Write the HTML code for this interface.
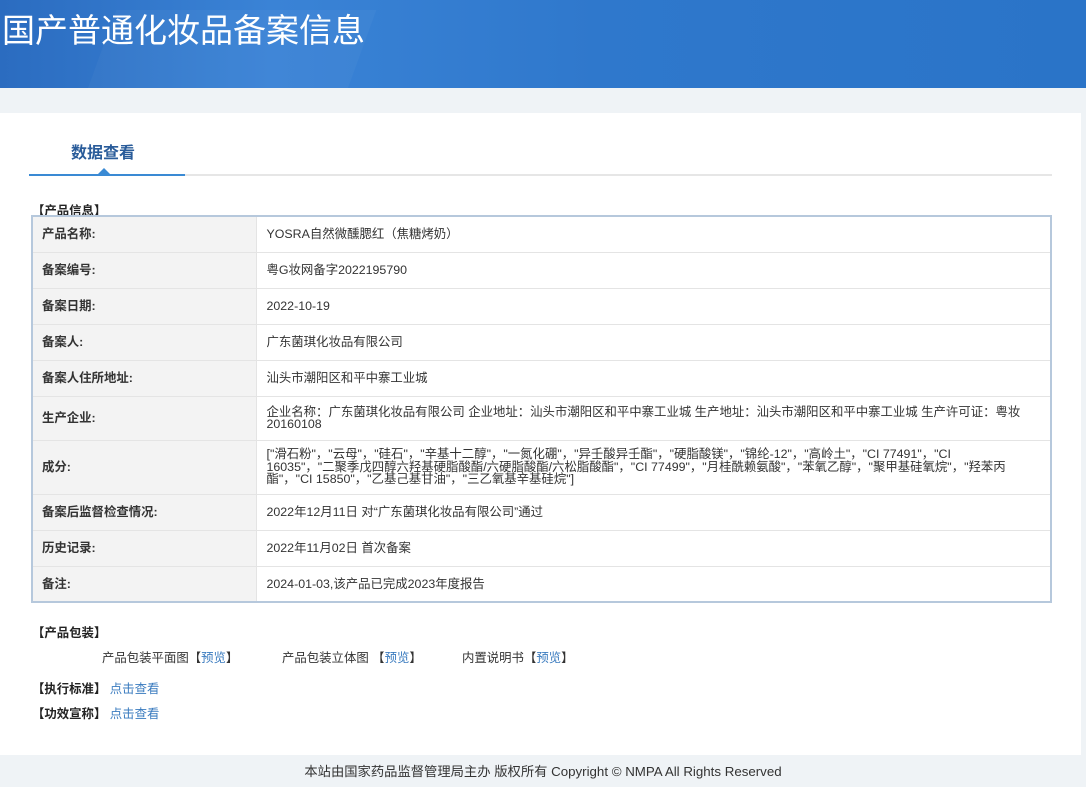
<!DOCTYPE html>
<html><head><meta charset="utf-8"><style>
*{margin:0;padding:0;box-sizing:border-box}
body{width:1086px;height:787px;overflow:hidden;background:#eff3f6;font-family:"Liberation Sans","Noto Sans CJK SC",sans-serif;font-size:12.4px;color:#333;position:relative}
.hd{position:absolute;left:0;top:0;width:1086px;height:88px;background:linear-gradient(90deg,#2b6cc0 0%,#3a83d6 25%,#2f78cc 55%,#2a74c8 100%);overflow:hidden}
.hd:before{content:"";position:absolute;left:100px;top:10px;width:260px;height:90px;background:rgba(255,255,255,.03);transform:skewX(-20deg)}
.hd h1{position:absolute;left:2px;top:4px;font-size:33px;font-weight:normal;color:#fff;letter-spacing:0}
.panel{position:absolute;left:0;top:113px;width:1081px;height:642px;background:#fff}
.tab{position:absolute;left:71px;top:139px;font-size:16px;font-weight:bold;color:#2a5c9a}
.line{position:absolute;left:29px;top:174px;width:1023px;height:2px;background:#e6e6e6}
.line b{position:absolute;left:0;top:0;width:156px;height:2px;background:#3a8ad4}
.tri{position:absolute;left:98px;top:168px;width:0;height:0;border-left:6px solid transparent;border-right:6px solid transparent;border-bottom:6px solid #3a8ad4}
.sec{position:absolute;font-weight:bold;color:#222;font-size:12.4px}
table{position:absolute;left:31px;top:215px;width:1021px;border-collapse:collapse;border:2px solid #b6c8dc}
td{border:1px solid #e4e4e4;padding:0 10px;vertical-align:middle;line-height:12.5px}
td.l{width:224px;background:#f3f3f3;font-weight:bold;color:#333;padding-left:9px}
td.v{color:#333}
a{color:#3a7bbf;text-decoration:none}
.ft{position:absolute;left:0;top:761px;width:1086px;text-align:center;font-size:13.3px;color:#333}
</style></head><body>
<div class="hd"><h1>国产普通化妆品备案信息</h1></div>
<div class="panel"></div>
<div class="tab">数据查看</div>
<div class="line"><b></b></div>
<div class="tri"></div>
<div class="sec" style="left:32px;top:201px">【产品信息】</div>
<table>
<tr style="height:36px"><td class="l">产品名称:</td><td class="v">YOSRA自然微醺腮红（焦糖烤奶）</td></tr>
<tr style="height:36px"><td class="l">备案编号:</td><td class="v">粤G妆网备字2022195790</td></tr>
<tr style="height:36px"><td class="l">备案日期:</td><td class="v">2022-10-19</td></tr>
<tr style="height:36px"><td class="l">备案人:</td><td class="v">广东菌琪化妆品有限公司</td></tr>
<tr style="height:36px"><td class="l">备案人住所地址:</td><td class="v">汕头市潮阳区和平中寨工业城</td></tr>
<tr style="height:44px"><td class="l">生产企业:</td><td class="v">企业名称：广东菌琪化妆品有限公司 企业地址：汕头市潮阳区和平中寨工业城 生产地址：汕头市潮阳区和平中寨工业城 生产许可证：粤妆<br>20160108</td></tr>
<tr style="height:54px"><td class="l">成分:</td><td class="v">["滑石粉"，"云母"，"硅石"，"辛基十二醇"，"一氮化硼"，"异壬酸异壬酯"，"硬脂酸镁"，"锦纶-12"，"高岭土"，"CI 77491"，"CI<br>16035"，"二聚季戊四醇六羟基硬脂酸酯/六硬脂酸酯/六松脂酸酯"，"CI 77499"，"月桂酰赖氨酸"，"苯氧乙醇"，"聚甲基硅氧烷"，"羟苯丙<br>酯"，"CI 15850"，"乙基己基甘油"，"三乙氧基辛基硅烷"]</td></tr>
<tr style="height:36px"><td class="l">备案后监督检查情况:</td><td class="v">2022年12月11日 对“广东菌琪化妆品有限公司”通过</td></tr>
<tr style="height:36px"><td class="l">历史记录:</td><td class="v">2022年11月02日 首次备案</td></tr>
<tr style="height:36px"><td class="l">备注:</td><td class="v">2024-01-03,该产品已完成2023年度报告</td></tr>
</table>
<div class="sec" style="left:32px;top:623px">【产品包装】</div>
<div style="position:absolute;left:102px;top:648px">产品包装平面图【<a>预览</a>】</div>
<div style="position:absolute;left:282px;top:648px">产品包装立体图 【<a>预览</a>】</div>
<div style="position:absolute;left:462px;top:648px">内置说明书【<a>预览</a>】</div>
<div class="sec" style="left:32px;top:679px">【执行标准】 <a style="font-weight:normal">点击查看</a></div>
<div class="sec" style="left:32px;top:704px">【功效宣称】 <a style="font-weight:normal">点击查看</a></div>
<div class="ft">本站由国家药品监督管理局主办 版权所有 Copyright © NMPA All Rights Reserved</div>
</body></html>
